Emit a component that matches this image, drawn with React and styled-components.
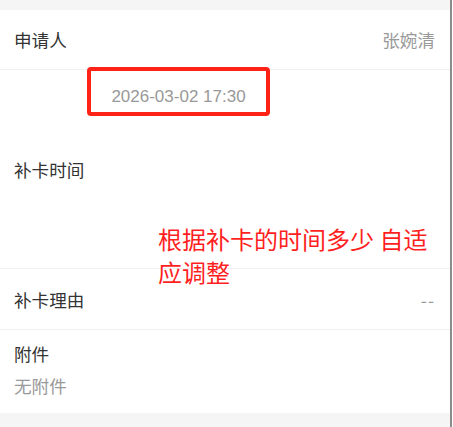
import React from "react";
import styled, { createGlobalStyle } from "styled-components";

const GlobalStyle = createGlobalStyle`
    html, body {
        margin: 0;
        padding: 0;
        background: #fff;
        font-family: "Noto Sans CJK SC", "Liberation Sans", sans-serif;
    }
`;

const Page = styled.div`
    position: relative;
    width: 452px;
    height: 427px;
    box-sizing: border-box;
    padding: 10px 0 14px;
    background: #f5f5f5;
    border-right: 2px solid #8c8c8c;
    display: flex;
    flex-direction: column;
`;

const Card = styled.div`
    background: #fff;
    display: flex;
    flex-direction: column;
    flex: 1;
`;

const Row = styled.div`
    display: flex;
    align-items: center;
    justify-content: space-between;
    height: ${(props) => props.height}px;
    padding: 0 15px 0 14px;
    border-bottom: ${(props) => (props.last ? "none" : "1px solid #f0f0f0")};
    box-sizing: border-box;
`;

const Label = styled.span`
    font-size: 17.6px;
    color: #333;
`;

const Value = styled.span`
    font-size: 17.6px;
    color: #999;
    letter-spacing: ${(props) => (props.wide ? "1px" : "0")};
`;

const Block = styled.div`
    display: flex;
    flex-direction: column;
    gap: 7px;
    padding: 11px 14px 0;
`;

const DateBox = styled.div`
    position: absolute;
    left: 87px;
    top: 67px;
    width: 183px;
    height: 49px;
    box-sizing: border-box;
    border: 4px solid #ff2317;
    border-radius: 4px;
    display: flex;
    align-items: center;
    justify-content: center;
    padding-top: 10px;
    font-family: "Liberation Sans", sans-serif;
    font-size: 17px;
    color: #999;
`;

const Note = styled.div`
    position: absolute;
    left: 158px;
    top: 222px;
    width: 285px;
    font-size: 24px;
    line-height: 33px;
    color: #ff1f1f;
`;

export default function App() {
    return (
        <>
            <GlobalStyle />
            <Page>
                <Card>
                    <Row height={60}>
                        <Label>申请人</Label>
                        <Value>张婉清</Value>
                    </Row>
                    <Row height={199}>
                        <Label>补卡时间</Label>
                    </Row>
                    <Row height={61}>
                        <Label>补卡理由</Label>
                        <Value wide>--</Value>
                    </Row>
                    <Block>
                        <Label>附件</Label>
                        <Value>无附件</Value>
                    </Block>
                </Card>
                <DateBox>2026-03-02 17:30</DateBox>
                <Note>根据补卡的时间多少 自适应调整</Note>
            </Page>
        </>
    );
}
